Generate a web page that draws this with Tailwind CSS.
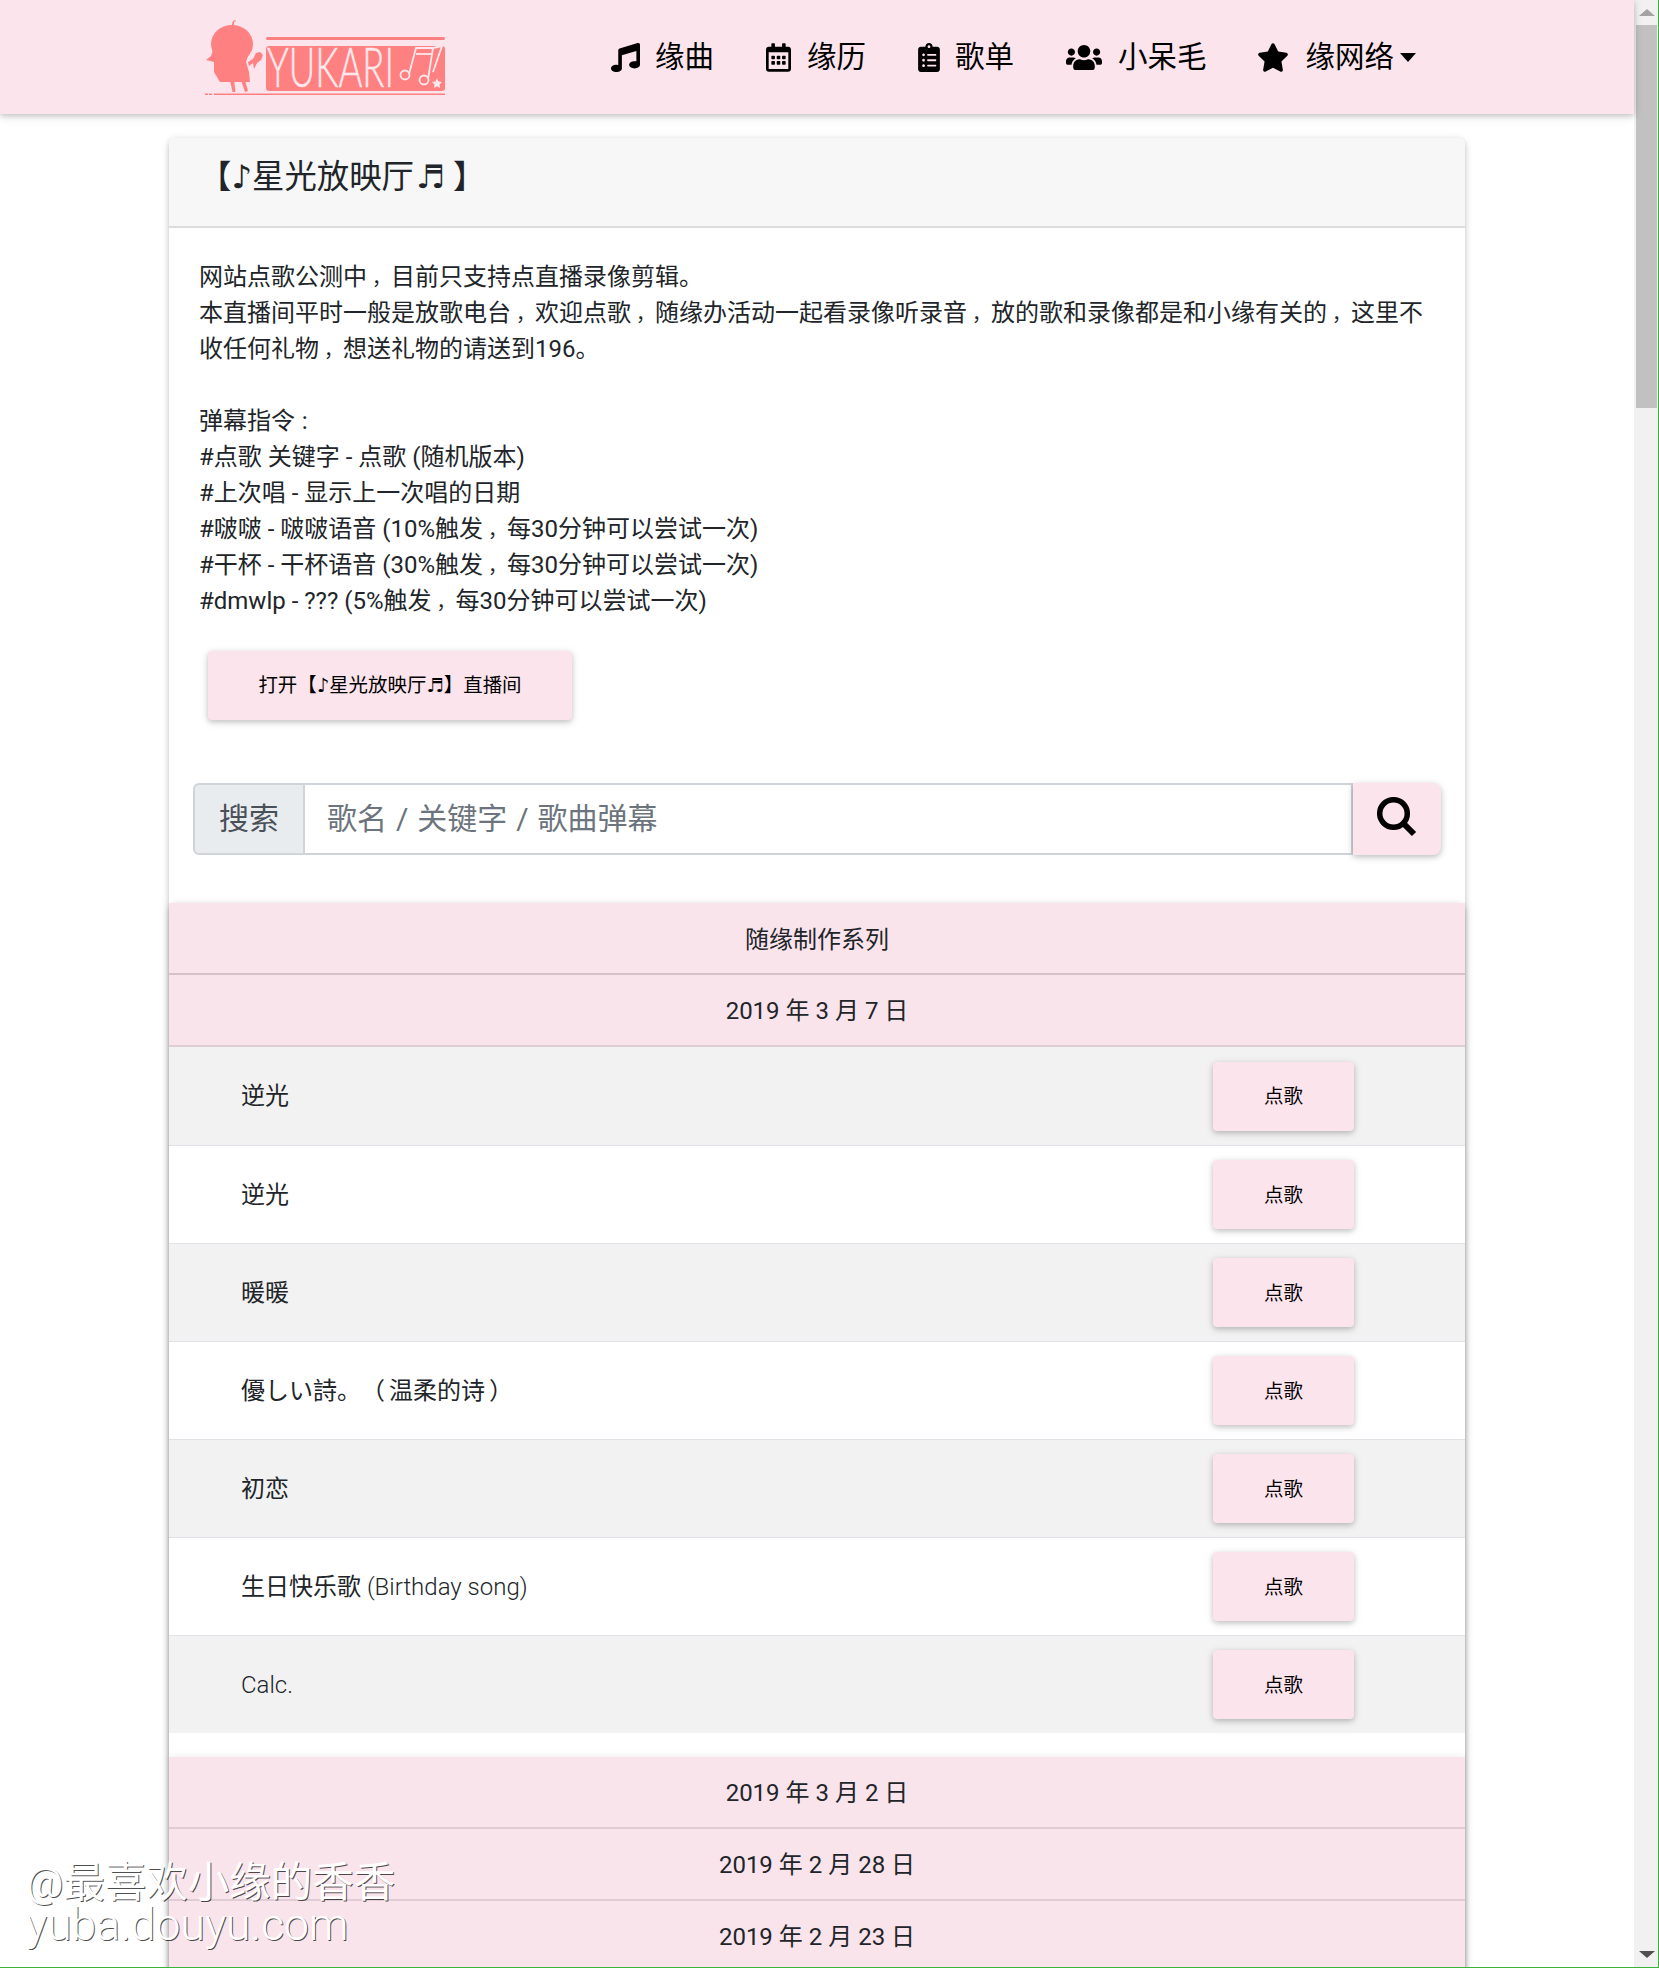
<!doctype html>
<html lang="zh-CN">
<head>
<meta charset="utf-8">
<title>星光放映厅</title>
<script src="https://cdn.jsdelivr.net/npm/@tailwindcss/browser@4"></script>
</head>
<body class="m-0 bg-white">
<div class="relative flex h-[1968px] w-[1659px] overflow-hidden border-r border-b border-[#3cb43c] bg-white font-['Roboto','Noto_Sans_CJK_SC',sans-serif] text-[24px] leading-[36px] font-normal text-[#212529] [text-spacing-trim:space-all]">

  <main class="w-[1634px] shrink-0">
    <nav class="relative z-10 flex h-[114px] items-center bg-[#fce4ec] pl-[205px] text-[29.5px] text-black shadow-[0_2px_5px_rgba(0,0,0,0.16),0_2px_10px_rgba(0,0,0,0.12)]">
      <svg class="h-[76px] w-[240px] shrink-0" viewBox="15 9 240 76" fill="#ff8080">
        <ellipse cx="42" cy="34" rx="21" ry="19"/>
        <path d="M42 15 q0 -4 3 -5 l1 1 -2 1 0 4z"/>
        <path d="M23 40 L21 46 L16 50 L24 52 L24 62 L30 72 L60 72 L59 62 L56 52 L60 40z"/>
        <path d="M40 70 l4 0 1.500 12 -3 0z M51 70 l4 0 3 11 -3 1z"/>
        <path d="M58 52 l5 -3 3 -6 4 -1 3 3 -2 5 -4 3 -3 6 -1 -6 -4 3z"/>
        <rect x="76" y="27" width="179" height="3" rx="1.5"/>
        <rect x="76" y="36" width="179" height="45" rx="3"/>
        <rect x="15" y="83.5" width="3" height="2"/><rect x="19" y="83.5" width="3" height="2"/><rect x="24" y="83.500" width="231" height="2"/>
        <text x="77" y="77" textLength="127" lengthAdjust="spacingAndGlyphs" font-family="Lato, sans-serif" font-weight="300" font-size="56" fill="#fde8ee" stroke="#fde8ee" stroke-width="0.5">YUKARI</text>
        <g fill="none" stroke="#fde8ee" stroke-width="1.8">
          <circle cx="215" cy="65" r="4.5"/><circle cx="234" cy="70" r="4.5"/>
          <path d="M219 64 L226 38 L243 38 L238 69"/>
          <path d="M226 44 L242 44"/>
          <path d="M243 38 L252 36 L243 62"/>
        </g>
        <polygon fill="#fde8ee" points="247,68 248.500,71.500 252,72 249.500,74.500 250,78 247,76.300 244,78 244.500,74.500 242,72 245.500,71.500"/>
      </svg>

      <a class="ml-[166px] flex items-center">
        <svg class="mr-[15px] h-[29px] w-[29px]" viewBox="0 0 512 512" fill="currentColor"><path d="M470.400 1.500 150.400 96A32 32 0 0 0 128 126.500v261.400A139 139 0 0 0 96 384c-53 0-96 28.700-96 64s43 64 96 64 96-28.700 96-64V214.300l256-75v185.100a138.700 138.700 0 0 0-32-3.900c-53 0-96 28.700-96 64s43 64 96 64 96-28.700 96-64V32a32 32 0 0 0-41.600-30.500z"/></svg>
        <span>缘曲</span>
      </a>
      <a class="ml-[52px] flex items-center">
        <svg class="mr-[16px] h-[29px] w-[25px]" viewBox="0 0 448 512" fill="currentColor"><path d="M148 288h-40c-6.600 0-12-5.400-12-12v-40c0-6.600 5.400-12 12-12h40c6.600 0 12 5.400 12 12v40c0 6.600-5.400 12-12 12zm108-12v-40c0-6.600-5.400-12-12-12h-40c-6.600 0-12 5.400-12 12v40c0 6.600 5.400 12 12 12h40c6.600 0 12-5.400 12-12zm96 0v-40c0-6.600-5.400-12-12-12h-40c-6.600 0-12 5.400-12 12v40c0 6.600 5.400 12 12 12h40c6.600 0 12-5.400 12-12zm-96 96v-40c0-6.600-5.400-12-12-12h-40c-6.600 0-12 5.400-12 12v40c0 6.600 5.400 12 12 12h40c6.600 0 12-5.400 12-12zm-96 0v-40c0-6.600-5.400-12-12-12h-40c-6.600 0-12 5.400-12 12v40c0 6.600 5.400 12 12 12h40c6.600 0 12-5.400 12-12zm192 0v-40c0-6.600-5.400-12-12-12h-40c-6.600 0-12 5.400-12 12v40c0 6.600 5.400 12 12 12h40c6.600 0 12-5.400 12-12zm96-260v352c0 26.500-21.500 48-48 48H48c-26.500 0-48-21.500-48-48V112c0-26.500 21.500-48 48-48h48V12c0-6.600 5.400-12 12-12h40c6.600 0 12 5.400 12 12v52h128V12c0-6.600 5.400-12 12-12h40c6.600 0 12 5.400 12 12v52h48c26.500 0 48 21.500 48 48zm-48 346V160H48v298c0 3.300 2.700 6 6 6h340c3.300 0 6-2.700 6-6z"/></svg>
        <span>缘历</span>
      </a>
      <a class="ml-[52px] flex items-center">
        <svg class="mr-[15px] h-[29px] w-[22px]" viewBox="0 0 384 512" fill="currentColor"><path d="M336 64h-80c0-35.300-28.700-64-64-64s-64 28.700-64 64H48C21.500 64 0 85.500 0 112v352c0 26.500 21.500 48 48 48h288c26.500 0 48-21.500 48-48V112c0-26.500-21.500-48-48-48zM96 424c-13.300 0-24-10.700-24-24s10.700-24 24-24 24 10.700 24 24-10.700 24-24 24zm0-96c-13.300 0-24-10.700-24-24s10.700-24 24-24 24 10.700 24 24-10.700 24-24 24zm0-96c-13.300 0-24-10.700-24-24s10.700-24 24-24 24 10.700 24 24-10.700 24-24 24zm96-192c13.300 0 24 10.700 24 24s-10.700 24-24 24-24-10.700-24-24 10.700-24 24-24zm128 368c0 4.400-3.600 8-8 8H168c-4.400 0-8-3.600-8-8v-16c0-4.400 3.600-8 8-8h144c4.400 0 8 3.600 8 8v16zm0-96c0 4.400-3.600 8-8 8H168c-4.400 0-8-3.600-8-8v-16c0-4.400 3.600-8 8-8h144c4.400 0 8 3.600 8 8v16zm0-96c0 4.400-3.600 8-8 8H168c-4.400 0-8-3.600-8-8v-16c0-4.400 3.600-8 8-8h144c4.400 0 8 3.600 8 8v16z"/></svg>
        <span>歌单</span>
      </a>
      <a class="ml-[52px] flex items-center">
        <svg class="mr-[16px] h-[29px] w-[36px]" viewBox="0 0 640 512" fill="currentColor"><path d="M96 224c35.300 0 64-28.700 64-64s-28.700-64-64-64-64 28.700-64 64 28.700 64 64 64zm448 0c35.300 0 64-28.700 64-64s-28.700-64-64-64-64 28.700-64 64 28.700 64 64 64zm32 32h-64c-17.600 0-33.500 7.100-45.100 18.600 40.300 22.100 68.900 62 75.100 109.400h66c17.700 0 32-14.300 32-32v-32c0-35.300-28.700-64-64-64zm-256 0c61.900 0 112-50.100 112-112S381.900 32 320 32 208 82.100 208 144s50.100 112 112 112zm76.800 32h-8.300c-20.800 10-43.900 16-68.500 16s-47.600-6-68.500-16h-8.300C179.600 288 128 339.600 128 403.200V432c0 26.500 21.500 48 48 48h288c26.500 0 48-21.500 48-48v-28.800c0-63.600-51.600-115.200-115.200-115.200zm-223.700-13.400C161.500 263.100 145.600 256 128 256H64c-35.300 0-64 28.700-64 64v32c0 17.700 14.300 32 32 32h65.900c6.300-47.400 34.900-87.300 75.200-109.400z"/></svg>
        <span>小呆毛</span>
      </a>
      <a class="ml-[50px] flex items-center">
        <svg class="mr-[17px] h-[31px] w-[32px]" viewBox="0 0 576 512" fill="currentColor"><path d="M259.300 17.800 194 150.200 47.900 171.500c-26.200 3.800-36.700 36.100-17.700 54.600l105.700 103-25 145.500c-4.500 26.300 23.200 46 46.400 33.700L288 439.600l130.700 68.700c23.200 12.200 50.900-7.400 46.400-33.700l-25-145.500 105.700-103c19-18.500 8.500-50.800-17.700-54.600L382 150.200 316.700 17.800c-11.700-23.600-45.600-23.900-57.400 0z"/></svg>
        <span>缘网络</span>
        <span class="ml-[6px] h-0 w-0 border-x-[8px] border-t-[9px] border-x-transparent border-t-black"></span>
      </a>
    </nav>

    <section class="mx-[169px] mt-[24px] w-[1296px] rounded-t-[6px] bg-white shadow-[0_2px_5px_rgba(0,0,0,0.16),0_2px_10px_rgba(0,0,0,0.12)]">
      <header class="h-[90px] rounded-t-[6px] border-b-2 border-[#dcdcdc] bg-[#f7f7f7] px-[30px] pt-[15px] text-[32.4px] leading-[48px]">【<span class="font-['DejaVu_Sans']">♪</span>星光放映厅<span class="mr-[8px] ml-[2px] font-['DejaVu_Sans']">♬</span>】</header>

      <div class="px-[30px] pt-[31px]">
        <p>网站点歌公测中<span class="inline-block w-[24px] pl-[5px] text-[19px] leading-none">，</span>目前只支持点直播录像剪辑。<br>本直播间平时一般是放歌电台<span class="inline-block w-[24px] pl-[5px] text-[19px] leading-none">，</span>欢迎点歌<span class="inline-block w-[24px] pl-[5px] text-[19px] leading-none">，</span>随缘办活动一起看录像听录音<span class="inline-block w-[24px] pl-[5px] text-[19px] leading-none">，</span>放的歌和录像都是和小缘有关的<span class="inline-block w-[24px] pl-[5px] text-[19px] leading-none">，</span>这里不收任何礼物<span class="inline-block w-[24px] pl-[5px] text-[19px] leading-none">，</span>想送礼物的请送到196。<br><br>弹幕指令<span class="inline-block w-[24px] pl-[5px] text-[19px] leading-none">：</span><br>#点歌 关键字 - 点歌 (随机版本)<br>#上次唱 - 显示上一次唱的日期<br>#啵啵 - 啵啵语音 (10%触发<span class="inline-block w-[24px] pl-[5px] text-[19px] leading-none">，</span>每30分钟可以尝试一次)<br>#干杯 - 干杯语音 (30%触发<span class="inline-block w-[24px] pl-[5px] text-[19px] leading-none">，</span>每30分钟可以尝试一次)<br>#dmwlp - ??? (5%触发<span class="inline-block w-[24px] pl-[5px] text-[19px] leading-none">，</span>每30分钟可以尝试一次)</p>
        <button class="mt-[32px] ml-[9px] block h-[69px] w-[364px] rounded-[4px] bg-[#fce4ec] text-center text-[19.44px] leading-[29px] text-black shadow-[0_2px_5px_rgba(0,0,0,0.16),0_2px_10px_rgba(0,0,0,0.12)]">打开【<span class="font-['DejaVu_Sans']">♪</span>星光放映厅<span class="font-['DejaVu_Sans']">♬</span>】直播间</button>
      </div>

      <div class="mt-[63px] ml-[24px] flex h-[72px] w-[1248px] text-[30px]">
        <div class="flex w-[112px] items-center justify-center rounded-l-[6px] border-2 border-[#ced4da] bg-[#e9ecef] text-[#495057]">搜索</div>
        <div class="flex flex-1 items-center border-y-2 border-r-2 border-[#ced4da] pl-[22px] text-[#6c757d] [word-spacing:1.5px]">歌名 / 关键字 / 歌曲弹幕</div>
        <button class="relative flex w-[88px] items-center justify-center rounded-r-[8px] bg-[#fce4ec] pb-[4px] shadow-[0_2px_5px_rgba(0,0,0,0.16),0_2px_10px_rgba(0,0,0,0.12)]">
          <svg class="h-[40px] w-[40px]" viewBox="0 0 40 40" fill="none" stroke="#000"><circle cx="16.500" cy="16.500" r="13.800" stroke-width="5.500"/><path d="M26.500 26.500 L37 37" stroke-width="6"/></svg>
        </button>
      </div>

      <div class="mt-[48px] h-[1100px] rounded-t-[6px] bg-white shadow-[0_2px_5px_rgba(0,0,0,0.16),0_2px_10px_rgba(0,0,0,0.12)]">
        <div class="h-[72px] border-b-2 border-black/15 bg-[#fae4ec] pt-[19px] text-center">随缘制作系列</div>
        <div class="h-[72px] border-b-2 border-black/10 bg-[#fae4ec] pt-[18px] text-center">2019 年 3 月 7 日</div>

        <div class="flex h-[98px] items-center bg-[#f2f2f2] pr-[111px] pl-[72px]"><span class="flex-1">逆光</span><button class="h-[69px] w-[141px] rounded-[4px] bg-[#fce4ec] pt-[2px] text-[19.44px] text-black shadow-[0_2px_5px_rgba(0,0,0,0.16),0_2px_10px_rgba(0,0,0,0.12)]">点歌</button></div>
        <div class="flex h-[98px] items-center border-t border-[#dee2e6] bg-white pr-[111px] pl-[72px]"><span class="flex-1">逆光</span><button class="h-[69px] w-[141px] rounded-[4px] bg-[#fce4ec] pt-[2px] text-[19.44px] text-black shadow-[0_2px_5px_rgba(0,0,0,0.16),0_2px_10px_rgba(0,0,0,0.12)]">点歌</button></div>
        <div class="flex h-[98px] items-center border-t border-[#dee2e6] bg-[#f2f2f2] pr-[111px] pl-[72px]"><span class="flex-1">暖暖</span><button class="h-[69px] w-[141px] rounded-[4px] bg-[#fce4ec] pt-[2px] text-[19.44px] text-black shadow-[0_2px_5px_rgba(0,0,0,0.16),0_2px_10px_rgba(0,0,0,0.12)]">点歌</button></div>
        <div class="flex h-[98px] items-center border-t border-[#dee2e6] bg-white pr-[111px] pl-[72px]"><span class="flex-1 [word-spacing:-2px]">優しい詩。（ 温柔的诗 ）</span><button class="h-[69px] w-[141px] rounded-[4px] bg-[#fce4ec] pt-[2px] text-[19.44px] text-black shadow-[0_2px_5px_rgba(0,0,0,0.16),0_2px_10px_rgba(0,0,0,0.12)]">点歌</button></div>
        <div class="flex h-[98px] items-center border-t border-[#dee2e6] bg-[#f2f2f2] pr-[111px] pl-[72px]"><span class="flex-1">初恋</span><button class="h-[69px] w-[141px] rounded-[4px] bg-[#fce4ec] pt-[2px] text-[19.44px] text-black shadow-[0_2px_5px_rgba(0,0,0,0.16),0_2px_10px_rgba(0,0,0,0.12)]">点歌</button></div>
        <div class="flex h-[98px] items-center border-t border-[#dee2e6] bg-white pr-[111px] pl-[72px]"><span class="flex-1">生日快乐歌 <span class="font-light">(Birthday song)</span></span><button class="h-[69px] w-[141px] rounded-[4px] bg-[#fce4ec] pt-[2px] text-[19.44px] text-black shadow-[0_2px_5px_rgba(0,0,0,0.16),0_2px_10px_rgba(0,0,0,0.12)]">点歌</button></div>
        <div class="flex h-[98px] items-center border-t border-[#dee2e6] bg-[#f2f2f2] pr-[111px] pl-[72px]"><span class="flex-1 font-light">Calc.</span><button class="h-[69px] w-[141px] rounded-[4px] bg-[#fce4ec] pt-[2px] text-[19.44px] text-black shadow-[0_2px_5px_rgba(0,0,0,0.16),0_2px_10px_rgba(0,0,0,0.12)]">点歌</button></div>

        <div class="mt-[24px] shadow-[0_-2px_6px_rgba(0,0,0,0.06)]">
          <div class="h-[72px] border-b-2 border-black/10 bg-[#fae4ec] pt-[18px] text-center">2019 年 3 月 2 日</div>
          <div class="h-[72px] border-b-2 border-black/10 bg-[#fae4ec] pt-[18px] text-center">2019 年 2 月 28 日</div>
          <div class="h-[72px] bg-[#fae4ec] pt-[18px] text-center">2019 年 2 月 23 日</div>
        </div>
      </div>
    </section>
  </main>

  <aside class="flex w-[24px] shrink-0 flex-col bg-[#f1f1f1] pr-[1px] pl-[2px]">
    <div class="flex h-[25px] items-center justify-center"><span class="h-0 w-0 border-x-[8px] border-b-[7px] border-x-transparent border-b-[#a3a3a3]"></span></div>
    <div class="h-[383px] bg-[#c1c1c1]"></div>
    <div class="flex-1"></div>
    <div class="flex h-[25px] items-center justify-center"><span class="h-0 w-0 border-x-[8px] border-t-[7px] border-x-transparent border-t-[#505050]"></span></div>
  </aside>

  <div class="absolute bottom-[20px] left-[26px] text-[41.5px] leading-[43px] text-white [text-shadow:1px_1px_0_rgba(0,0,0,0.7)]">@最喜欢小缘的香香<br><span class="text-[44.5px] font-light">yuba.douyu.com</span></div>
</div>
</body>
</html>
